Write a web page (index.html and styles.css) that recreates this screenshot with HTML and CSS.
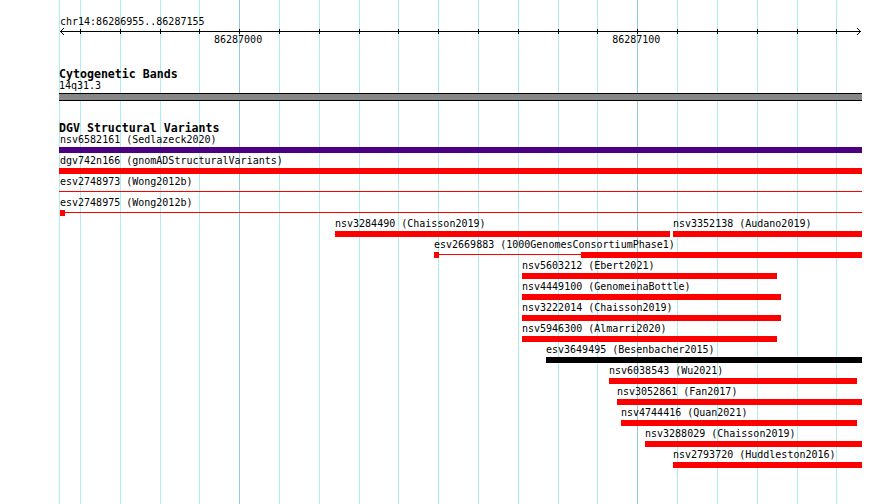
FILE: index.html
```html
<!DOCTYPE html>
<html>
<head>
<meta charset="utf-8">
<title>chr14:86286955..86287155</title>
<link rel="stylesheet" href="styles.css">
</head>
<body>
<div class="page">
  <div class="grid">
    <div class="gl spacer" style="width:59px"></div>
    <div class="gl" style="width:21px"></div>
    <div class="gl" style="width:40px"></div>
    <div class="gl" style="width:40px"></div>
    <div class="gl" style="width:39px"></div>
    <div class="gl" style="width:40px"></div>
    <div class="gl major" style="width:40px"></div>
    <div class="gl" style="width:40px"></div>
    <div class="gl" style="width:40px"></div>
    <div class="gl" style="width:39px"></div>
    <div class="gl" style="width:40px"></div>
    <div class="gl" style="width:40px"></div>
    <div class="gl" style="width:40px"></div>
    <div class="gl" style="width:40px"></div>
    <div class="gl" style="width:39px"></div>
    <div class="gl" style="width:40px"></div>
    <div class="gl major" style="width:40px"></div>
    <div class="gl" style="width:40px"></div>
    <div class="gl" style="width:40px"></div>
    <div class="gl" style="width:40px"></div>
    <div class="gl" style="width:39px"></div>
    <div class="gl" style="width:1px"></div>
  </div>

  <div class="content">
    <div class="ruler-label">chr14:86286955..86287155</div>
    <svg class="scale" width="803" height="8" viewBox="0 0 803 8">
      <path class="crisp" d="M1 4.5H802" stroke="#000" stroke-width="1" fill="none"/>
      <path class="crisp" d="M21.5 2V7M61.5 2V7M101.5 2V7M140.5 2V7M180.5 2V7M220.5 2V7M260.5 2V7M300.5 2V7M339.5 2V7M379.5 2V7M419.5 2V7M459.5 2V7M499.5 2V7M538.5 2V7M578.5 2V7M618.5 2V7M658.5 2V7M698.5 2V7M738.5 2V7M777.5 2V7" stroke="#000" stroke-width="1" fill="none"/>
      <polyline points="5,1 1.5,4.5 5,8" stroke="#000" stroke-width="1" fill="none"/>
      <polyline points="798,1 801.5,4.5 798,8" stroke="#000" stroke-width="1" fill="none"/>
    </svg>
    <div class="major-labels">
      <span class="m1">86287000</span>
      <span class="m2">86287100</span>
    </div>

    <div class="track-title">Cytogenetic Bands</div>
    <div class="band-name">14q31.3</div>
    <div class="band"></div>

    <div class="track-title dgv">DGV Structural Variants</div>

    <div class="row">
      <div class="feat" style="margin-left:0;width:803px">
        <div class="lbl edge">nsv6582161 (Sedlazeck2020)</div>
        <div class="bar purple"></div>
      </div>
    </div>
    <div class="row">
      <div class="feat" style="margin-left:0;width:803px">
        <div class="lbl edge">dgv742n166 (gnomADStructuralVariants)</div>
        <div class="bar"></div>
      </div>
    </div>
    <div class="row">
      <div class="feat" style="margin-left:0;width:803px">
        <div class="lbl edge">esv2748973 (Wong2012b)</div>
        <div class="seg"><div class="ln"></div></div>
      </div>
    </div>
    <div class="row">
      <div class="feat" style="margin-left:1px;width:802px">
        <div class="lbl">esv2748975 (Wong2012b)</div>
        <div class="seg"><div class="sq"></div><div class="ln"></div></div>
      </div>
    </div>
    <div class="row">
      <div class="feat" style="margin-left:276px;width:335px">
        <div class="lbl">nsv3284490 (Chaisson2019)</div>
        <div class="bar"></div>
      </div>
      <div class="feat" style="margin-left:3px;width:189px">
        <div class="lbl">nsv3352138 (Audano2019)</div>
        <div class="bar"></div>
      </div>
    </div>
    <div class="row">
      <div class="feat" style="margin-left:375px;width:428px">
        <div class="lbl">esv2669883 (1000GenomesConsortiumPhase1)</div>
        <div class="seg"><div class="sq"></div><div class="ln"></div><div class="thick" style="width:281px"></div></div>
      </div>
    </div>
    <div class="row">
      <div class="feat" style="margin-left:463px;width:255px">
        <div class="lbl">nsv5603212 (Ebert2021)</div>
        <div class="bar"></div>
      </div>
    </div>
    <div class="row">
      <div class="feat" style="margin-left:463px;width:259px">
        <div class="lbl">nsv4449100 (GenomeinaBottle)</div>
        <div class="bar"></div>
      </div>
    </div>
    <div class="row">
      <div class="feat" style="margin-left:463px;width:259px">
        <div class="lbl">nsv3222014 (Chaisson2019)</div>
        <div class="bar"></div>
      </div>
    </div>
    <div class="row">
      <div class="feat" style="margin-left:463px;width:255px">
        <div class="lbl">nsv5946300 (Almarri2020)</div>
        <div class="bar"></div>
      </div>
    </div>
    <div class="row">
      <div class="feat" style="margin-left:487px;width:316px">
        <div class="lbl">esv3649495 (Besenbacher2015)</div>
        <div class="bar black"></div>
      </div>
    </div>
    <div class="row">
      <div class="feat" style="margin-left:550px;width:248px">
        <div class="lbl">nsv6038543 (Wu2021)</div>
        <div class="bar"></div>
      </div>
    </div>
    <div class="row">
      <div class="feat" style="margin-left:558px;width:245px">
        <div class="lbl">nsv3052861 (Fan2017)</div>
        <div class="bar"></div>
      </div>
    </div>
    <div class="row">
      <div class="feat" style="margin-left:562px;width:236px">
        <div class="lbl">nsv4744416 (Quan2021)</div>
        <div class="bar"></div>
      </div>
    </div>
    <div class="row">
      <div class="feat" style="margin-left:586px;width:217px">
        <div class="lbl">nsv3288029 (Chaisson2019)</div>
        <div class="bar"></div>
      </div>
    </div>
    <div class="row">
      <div class="feat" style="margin-left:614px;width:189px">
        <div class="lbl">nsv2793720 (Huddleston2016)</div>
        <div class="bar"></div>
      </div>
    </div>
  </div>
</div>
</body>
</html>
```

FILE: styles.css
```css
html, body {
  margin: 0;
  padding: 0;
  background: #ffffff;
}

body {
  font-family: "DejaVu Sans Mono", "Liberation Mono", monospace;
  font-size: 10px;
  color: #000000;
}

.page {
  display: grid;
  width: 890px;
  height: 504px;
  overflow: hidden;
}

.grid,
.content {
  grid-area: 1 / 1;
}

.grid {
  display: flex;
  height: 504px;
}

.gl {
  flex: none;
  height: 100%;
  box-sizing: border-box;
  border-left: 1px solid #afeeee;
}

.gl.major {
  border-left-color: #8ecbe4;
}

.gl.spacer {
  border-left: none;
}

.content {
  display: flex;
  flex-direction: column;
  padding-left: 59px;
  width: 803px;
}

.ruler-label {
  margin-top: 17px;
  height: 10px;
  line-height: 10px;
  padding-left: 1px;
  white-space: nowrap;
}

.scale {
  display: block;
  width: 803px;
  height: 8px;
}

.crisp {
  shape-rendering: crispEdges;
}

.major-labels {
  display: flex;
  height: 11px;
  line-height: 10px;
  white-space: nowrap;
}

.m1 {
  margin-left: 155px;
}

.m2 {
  margin-left: 350px;
}

.track-title {
  margin-top: 23px;
  height: 12px;
  line-height: 10px;
  font-weight: bold;
  font-size: 11.6px;
  white-space: nowrap;
}

.track-title.dgv {
  margin-top: 22px;
}

.band-name {
  height: 11px;
  line-height: 10px;
}

.band {
  margin-top: 1px;
  height: 6px;
  border-top: 1px solid #000000;
  border-bottom: 1px solid #000000;
  background: #878787;
}

.row {
  display: flex;
  height: 21px;
}

.feat {
  display: flex;
  flex-direction: column;
  flex: none;
}

.lbl {
  height: 12px;
  line-height: 10px;
  white-space: nowrap;
}

.lbl.edge {
  padding-left: 1px;
}

.bar {
  height: 6px;
  background: #ff0000;
}

.bar.purple {
  background: #4b0082;
}

.bar.black {
  background: #000000;
}

.seg {
  display: flex;
  height: 6px;
}

.sq {
  flex: none;
  width: 5px;
  height: 6px;
  background: #ff0000;
}

.ln {
  flex: 1;
  height: 1px;
  margin-top: 2px;
  background: #ff0000;
}

.thick {
  flex: none;
  height: 6px;
  background: #ff0000;
}
```
